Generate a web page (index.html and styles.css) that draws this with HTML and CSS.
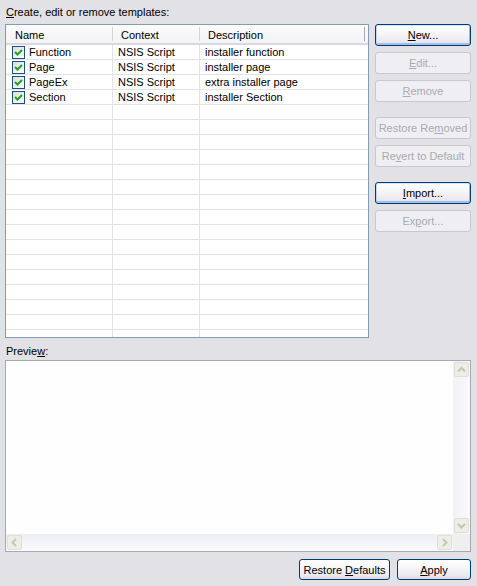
FILE: index.html
```html
<!DOCTYPE html>
<html>
<head>
<meta charset="utf-8">
<link rel="stylesheet" href="styles.css">
</head>
<body>
<div class="page">
  <div class="label"><u>C</u>reate, edit or remove templates:</div>
  <div class="top">
    <div class="grid">
      <div class="ghead">
        <div class="hc c1">Name</div><span class="sep"></span>
        <div class="hc c2">Context</div><span class="sep"></span>
        <div class="hc c3">Description</div><span class="sep dark"></span>
      </div>
      <div class="gbody">
        <div class="row">
          <div class="cell c1"><span class="chk"><svg width="11" height="11" viewBox="0 0 11 11"><polyline points="2,5 4.5,7.5 9,3" fill="none" stroke="#21a121" stroke-width="2"/></svg></span><span>Function</span></div>
          <div class="cell c2">NSIS Script</div>
          <div class="cell c3">installer function</div>
        </div>
        <div class="row">
          <div class="cell c1"><span class="chk"><svg width="11" height="11" viewBox="0 0 11 11"><polyline points="2,5 4.5,7.5 9,3" fill="none" stroke="#21a121" stroke-width="2"/></svg></span><span>Page</span></div>
          <div class="cell c2">NSIS Script</div>
          <div class="cell c3">installer page</div>
        </div>
        <div class="row">
          <div class="cell c1"><span class="chk"><svg width="11" height="11" viewBox="0 0 11 11"><polyline points="2,5 4.5,7.5 9,3" fill="none" stroke="#21a121" stroke-width="2"/></svg></span><span>PageEx</span></div>
          <div class="cell c2">NSIS Script</div>
          <div class="cell c3">extra installer page</div>
        </div>
        <div class="row">
          <div class="cell c1"><span class="chk"><svg width="11" height="11" viewBox="0 0 11 11"><polyline points="2,5 4.5,7.5 9,3" fill="none" stroke="#21a121" stroke-width="2"/></svg></span><span>Section</span></div>
          <div class="cell c2">NSIS Script</div>
          <div class="cell c3">installer Section</div>
        </div>
        <div class="row"><div class="cell c1"></div><div class="cell c2"></div><div class="cell c3"></div></div>
        <div class="row"><div class="cell c1"></div><div class="cell c2"></div><div class="cell c3"></div></div>
        <div class="row"><div class="cell c1"></div><div class="cell c2"></div><div class="cell c3"></div></div>
        <div class="row"><div class="cell c1"></div><div class="cell c2"></div><div class="cell c3"></div></div>
        <div class="row"><div class="cell c1"></div><div class="cell c2"></div><div class="cell c3"></div></div>
        <div class="row"><div class="cell c1"></div><div class="cell c2"></div><div class="cell c3"></div></div>
        <div class="row"><div class="cell c1"></div><div class="cell c2"></div><div class="cell c3"></div></div>
        <div class="row"><div class="cell c1"></div><div class="cell c2"></div><div class="cell c3"></div></div>
        <div class="row"><div class="cell c1"></div><div class="cell c2"></div><div class="cell c3"></div></div>
        <div class="row"><div class="cell c1"></div><div class="cell c2"></div><div class="cell c3"></div></div>
        <div class="row"><div class="cell c1"></div><div class="cell c2"></div><div class="cell c3"></div></div>
        <div class="row"><div class="cell c1"></div><div class="cell c2"></div><div class="cell c3"></div></div>
        <div class="row"><div class="cell c1"></div><div class="cell c2"></div><div class="cell c3"></div></div>
        <div class="row"><div class="cell c1"></div><div class="cell c2"></div><div class="cell c3"></div></div>
        <div class="row"><div class="cell c1"></div><div class="cell c2"></div><div class="cell c3"></div></div>
        <div class="row"><div class="cell c1"></div><div class="cell c2"></div><div class="cell c3"></div></div>
      </div>
    </div>
    <div class="side">
      <div class="group">
        <div class="btn focus"><span><u>N</u>ew...</span></div>
        <div class="btn dis"><span><u>E</u>dit...</span></div>
        <div class="btn dis"><span><u>R</u>emove</span></div>
      </div>
      <div class="group">
        <div class="btn dis"><span>Restore Re<u>m</u>oved</span></div>
        <div class="btn dis"><span>Re<u>v</u>ert to Default</span></div>
      </div>
      <div class="group">
        <div class="btn focus"><span><u>I</u>mport...</span></div>
        <div class="btn dis"><span>Ex<u>p</u>ort...</span></div>
      </div>
    </div>
  </div>
  <div class="plabel">Previe<u>w</u>:</div>
  <div class="preview">
    <div class="pcontent"></div>
    <div class="vscroll">
      <div class="sbtn"><svg width="13" height="13" viewBox="0 0 13 13"><polyline points="3,8.5 6.5,5 10,8.5" fill="none" stroke="#c6c5bb" stroke-width="2"/></svg></div>
      <div class="sbtn"><svg width="13" height="13" viewBox="0 0 13 13"><polyline points="3,5 6.5,8.5 10,5" fill="none" stroke="#c6c5bb" stroke-width="2"/></svg></div>
    </div>
    <div class="hscroll">
      <div class="sbtn"><svg width="13" height="13" viewBox="0 0 13 13"><polyline points="8,3 4.5,6.5 8,10" fill="none" stroke="#c6c5bb" stroke-width="2"/></svg></div>
      <div class="sbtn"><svg width="13" height="13" viewBox="0 0 13 13"><polyline points="5,3 8.5,6.5 5,10" fill="none" stroke="#c6c5bb" stroke-width="2"/></svg></div>
    </div>
    <div class="corner"></div>
  </div>
  <div class="bottom">
    <div class="btn wide"><span>Restore <u>D</u>efaults</span></div>
    <div class="btn apply"><span><u>A</u>pply</span></div>
  </div>
</div>
</body>
</html>
```

FILE: styles.css
```css
* { box-sizing: border-box; }
html, body { margin: 0; }
body {
  background: #e2e1e6;
  font: 11px "Liberation Sans", Arial, sans-serif;
  color: #000;
  width: 477px;
  height: 586px;
  overflow: hidden;
}
.page {
  display: flex;
  flex-direction: column;
  padding: 6px 6px 0 5px;
}
.label {
  line-height: 13px;
  padding-left: 1px;
  margin-bottom: 5px;
}
.top {
  display: flex;
  gap: 6px;
  height: 314px;
}
.grid {
  width: 364px;
  border: 1px solid #7f9db9;
  background: #fff;
  display: flex;
  flex-direction: column;
  overflow: hidden;
}
.ghead {
  display: flex;
  align-items: center;
  height: 20px;
  flex: none;
  background: linear-gradient(#fbfbfc, #f3f3f6);
  border-bottom: 2px solid #d9d8e0;
}
.hc {
  line-height: 18px;
  padding-left: 8px;
  padding-top: 1px;
  white-space: nowrap;
}
.hc.c1 { width: 106px; padding-left: 9px; }
.hc.c2 { width: 86px; }
.hc.c3 { width: 164px; }
.sep {
  width: 1px;
  height: 14px;
  background: #d3d2d9;
  flex: none;
}
.sep.dark { background: #a9a8b0; }
.gbody {
  flex: 1;
  overflow: hidden;
}
.row {
  display: flex;
  height: 15px;
  border-bottom: 1px solid #e3e2e7;
}
.cell {
  line-height: 14px;
  padding-left: 5px;
  white-space: nowrap;
  display: flex;
  align-items: center;
}
.cell.c1 { width: 107px; border-right: 1px solid #e3e2e7; padding-left: 6px; }
.cell.c2 { width: 87px; border-right: 1px solid #e3e2e7; }
.cell.c3 { flex: 1; }
.chk {
  width: 13px;
  height: 13px;
  flex: none;
  border: 1px solid #1c5180;
  background: linear-gradient(135deg, #dcdcd7, #ffffff);
  margin-right: 4px;
  display: flex;
}
.side {
  width: 96px;
  display: flex;
  flex-direction: column;
  gap: 15px;
}
.group {
  display: flex;
  flex-direction: column;
  gap: 6px;
}
.btn {
  height: 22px;
  border: 1px solid #003c74;
  border-radius: 3px;
  background: linear-gradient(#ffffff 0%, #f5f5f7 45%, #e9e8ee 85%, #d9d8e1 100%);
  display: flex;
  align-items: center;
  justify-content: center;
  white-space: nowrap;
}
.btn.focus {
  box-shadow: inset 0 1px 0 #cee7ff, inset 1px 0 0 #bcd4f6, inset -1px 0 0 #9db8e8, inset 0 -2px 0 #a5bde9;
}
.btn.dis {
  border-color: #c9c8cf;
  background: #efeef2;
  color: #abaab0;
}
.plabel {
  line-height: 13px;
  padding-left: 1px;
  margin-top: 7px;
  margin-bottom: 2px;
}
.preview {
  height: 192px;
  border: 1px solid #a3aab3;
  display: grid;
  grid-template-columns: 1fr 17px;
  grid-template-rows: 1fr 17px;
  background: #fff;
}
.pcontent { background: #fdfefd; }
.vscroll {
  background: linear-gradient(to right, #f1f1f6, #fafafc);
  display: flex;
  flex-direction: column;
  justify-content: space-between;
}
.hscroll {
  background: linear-gradient(#eceef5, #fbfbfd);
  display: flex;
  justify-content: space-between;
}
.sbtn {
  width: 17px;
  height: 17px;
  padding: 1px;
  display: flex;
}
.sbtn svg {
  width: 15px;
  height: 15px;
  background: #eeede6;
  border: 1px solid #e0dfd5;
  border-radius: 2px;
}
.corner { background: #efeff1; }
.bottom {
  display: flex;
  justify-content: flex-end;
  gap: 7px;
  margin-top: 7px;
}
.bottom .btn { height: 21px; }
.btn.wide { width: 91px; }
.btn.apply { width: 74px; }
```
